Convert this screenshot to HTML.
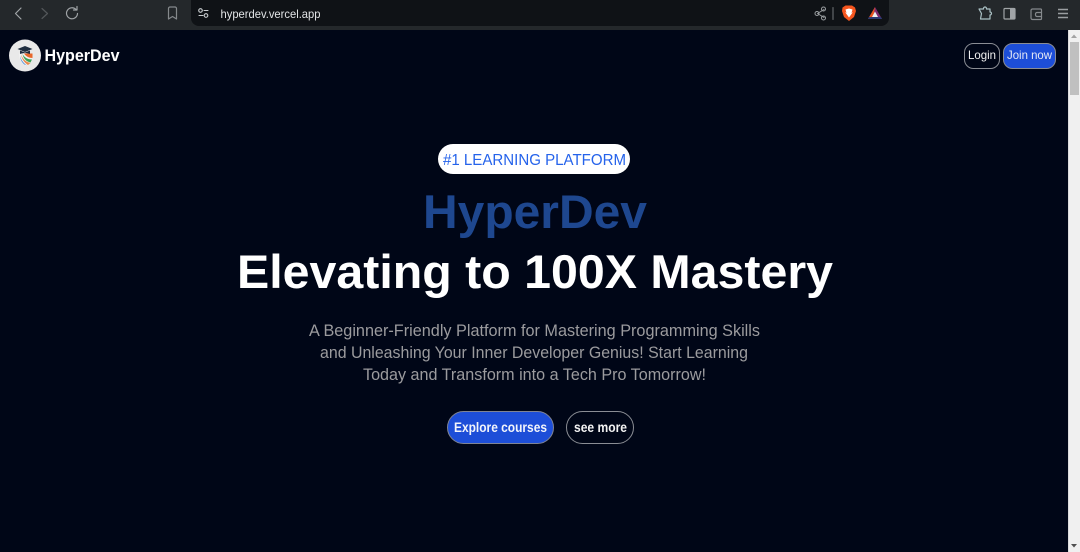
<!DOCTYPE html>
<html lang="en"><head><meta charset="utf-8"><title>HyperDev</title>
<style>html,body{margin:0;padding:0;background:#00061a;overflow:hidden}svg{display:block}text{font-family:"Liberation Sans",sans-serif}</style></head>
<body>
<svg width="1080" height="552" viewBox="0 0 1080 552" xmlns="http://www.w3.org/2000/svg">
<rect width="1080" height="552" fill="#000617"/>
<!-- browser bar -->
<rect width="1080" height="30" fill="#24282b"/>
<path d="M191 0H889V18a8 8 0 0 1-8 8H199a8 8 0 0 1-8-8Z" fill="#0f1216"/>
<g fill="none" stroke-linecap="round" stroke-linejoin="round" stroke-width="1.2">
<path d="M21 8L15.500 13.500L21 19" stroke="#a0a4a7"/>
<path d="M42 8.500L47.500 13.500L42 18.500" stroke="#53575a"/>
<path d="M76 9.500A5.500 5.500 0 1 0 77.500 13.500" stroke="#a0a4a7"/>
<path d="M73.500 10H77V6.500" stroke="#a0a4a7"/>
<path d="M168.500 8.500a1.500 1.500 0 0 1 1.500-1.500h5a1.500 1.500 0 0 1 1.500 1.500V19L172.500 16.500L168.500 19Z" stroke="#85898c"/>
<path d="M204 10.500H208M199 15.500H203" stroke="#c8cccf" stroke-width="1.100"/>
<circle cx="200.500" cy="10.500" r="1.800" stroke="#c8cccf" stroke-width="1.100"/>
<circle cx="206" cy="15.500" r="1.800" stroke="#c8cccf" stroke-width="1.100"/>
<path d="M824 9.500L817.500 13.500L824 17.500" stroke="#9a9ea1" stroke-width="1"/>
<circle cx="823.500" cy="9" r="2" stroke="#9a9ea1" stroke-width="1"/>
<circle cx="817" cy="13.500" r="2" stroke="#9a9ea1" stroke-width="1"/>
<circle cx="823.500" cy="18" r="2" stroke="#9a9ea1" stroke-width="1"/>
<path d="M833 7.500V19.500" stroke="#6a6e71" stroke-width="1.100"/>
<path d="M979 9H983.500V8.500a1.500 1.500 0 0 1 3 0V9H990V12a1.500 1.500 0 0 1 0 3V19H980.500L981.500 13.500Z" stroke="#a9c0c4"/>
<rect x="1004" y="8.500" width="11" height="10.500" rx="1" stroke="#a0a4a7"/>
<path d="M1032.500 9H1040.500A1 1 0 0 1 1041.500 10V18.500A1 1 0 0 1 1040.500 19.500H1032.500A1.500 1.500 0 0 1 1031 18V10.500A1.500 1.500 0 0 1 1032.500 9Z" stroke="#85898c"/>
<path d="M1041.500 12.500H1037A1.500 1.500 0 0 0 1035.500 14V15A1.500 1.500 0 0 0 1037 16.500H1041.500" stroke="#85898c"/>
</g>
<rect x="1010" y="9" width="5" height="10" fill="#a0a4a7"/>
<path d="M1058 9.500H1068M1058 13.500H1068M1058 17.500H1068" stroke="#9a9ea1" stroke-width="1.400"/>
<text x="220.500" y="18" font-size="12" fill="#e2e4e6" textLength="100" lengthAdjust="spacingAndGlyphs">hyperdev.vercel.app</text>
<!-- brave icon -->
<path d="M842.500 7.500L845.500 5.500H852L855 7.500L856 11L854 17L849 21L844 17L842 11Z" fill="#f4551e"/>
<path d="M845.500 9.500L849 8.500L852.500 9.500L851.500 13L853 12L849 17.500L845 12L846.500 13Z" fill="#fff"/>
<!-- triangle -->
<path d="M875 7L882 19H868Z" fill="#7d2a6f"/>
<path d="M875 7L868 19H873Z" fill="#e8541f"/>
<path d="M875 11.500L878 17H872Z" fill="#eef0f2"/>
<path d="M868 19H882L881 17H869Z" fill="#2c3a72"/>
<!-- scrollbar -->
<rect x="1068" y="30" width="12" height="522" fill="#f0f0f0"/>
<rect x="1068" y="30" width="1" height="522" fill="#dcdcdc"/>
<path d="M1071 38L1074 34.500L1077 38Z" fill="#a3a3a3"/>
<rect x="1070" y="42" width="9" height="53" fill="#c0c0c0"/>
<path d="M1071 544L1074 547.500L1077 544Z" fill="#505050"/>
<!-- logo -->
<circle cx="25" cy="55.500" r="16" fill="#e9e9e9"/>
<path d="M19 53.500L19.500 58C21 62 23.500 64.500 26 66C29.500 64.500 32 62 32.500 58V53.500Z" fill="#f2f2f2"/>
<path d="M20 56C21.500 61 24 63.500 27 65.500L24.500 64.500C22 62.500 20.500 60 20 56Z" fill="#3f83d8"/>
<path d="M21 54.500C23 59.500 26 62 30.500 63L28 65C25 63 22 60 21 54.500Z" fill="#e98a4c"/>
<path d="M22.500 54C24.500 57.500 27.500 59.500 32 59.500L30.500 62.500C26.500 61.500 23.500 59 22.500 54Z" fill="#3da35a"/>
<path d="M24 53.500H32.500V58C29 58 26 56.500 24 53.500Z" fill="#e8682c"/>
<path d="M17.500 49L25 46L32.500 49L25 52Z" fill="#1f2d3f"/>
<path d="M20 50.500V54C23 52.800 27 52.800 30 54V50.500L25 52.500Z" fill="#1f2d3f"/>
<!-- nav -->
<text x="44.500" y="61" font-size="17" font-weight="700" fill="#fff" textLength="75" lengthAdjust="spacingAndGlyphs">HyperDev</text>
<rect x="964.500" y="43.500" width="35" height="25" rx="9" fill="#000617" stroke="#8a8d94"/>
<text x="968" y="59" font-size="12" fill="#f1f1f1" textLength="28" lengthAdjust="spacingAndGlyphs">Login</text>
<rect x="1003.500" y="43.500" width="52" height="25" rx="9" fill="#1d4ed8" stroke="#8a8d94"/>
<text x="1007" y="59" font-size="12" fill="#e6e9f5" textLength="45" lengthAdjust="spacingAndGlyphs">Join now</text>
<!-- hero -->
<rect x="438" y="144" width="192" height="30" rx="15" fill="#fff"/>
<text x="443" y="165" font-size="16" fill="#2563eb" textLength="183" lengthAdjust="spacingAndGlyphs">#1 LEARNING PLATFORM</text>
<text x="423" y="228" font-size="47" font-weight="700" fill="#1e478f" textLength="224" lengthAdjust="spacingAndGlyphs">HyperDev</text>
<text x="237" y="288" font-size="47" font-weight="700" fill="#fff" textLength="596" lengthAdjust="spacingAndGlyphs">Elevating to 100X Mastery</text>
<g font-size="17" fill="#9b9b9e">
<text x="309" y="336" textLength="451" lengthAdjust="spacingAndGlyphs">A Beginner-Friendly Platform for Mastering Programming Skills</text>
<text x="320" y="358" textLength="428" lengthAdjust="spacingAndGlyphs">and Unleashing Your Inner Developer Genius! Start Learning</text>
<text x="363" y="380" textLength="343" lengthAdjust="spacingAndGlyphs">Today and Transform into a Tech Pro Tomorrow!</text>
</g>
<rect x="447.500" y="411.500" width="106" height="32" rx="16" fill="#1d4ed8" stroke="#7f8494"/>
<text x="454" y="432" font-size="14" font-weight="700" fill="#f2f4fb" textLength="93" lengthAdjust="spacingAndGlyphs">Explore courses</text>
<rect x="566.500" y="411.500" width="67" height="32" rx="16" fill="#000617" stroke="#8a8d94"/>
<text x="574" y="432" font-size="14" font-weight="700" fill="#f2f2f2" textLength="53" lengthAdjust="spacingAndGlyphs">see more</text>
</svg>
</body></html>
